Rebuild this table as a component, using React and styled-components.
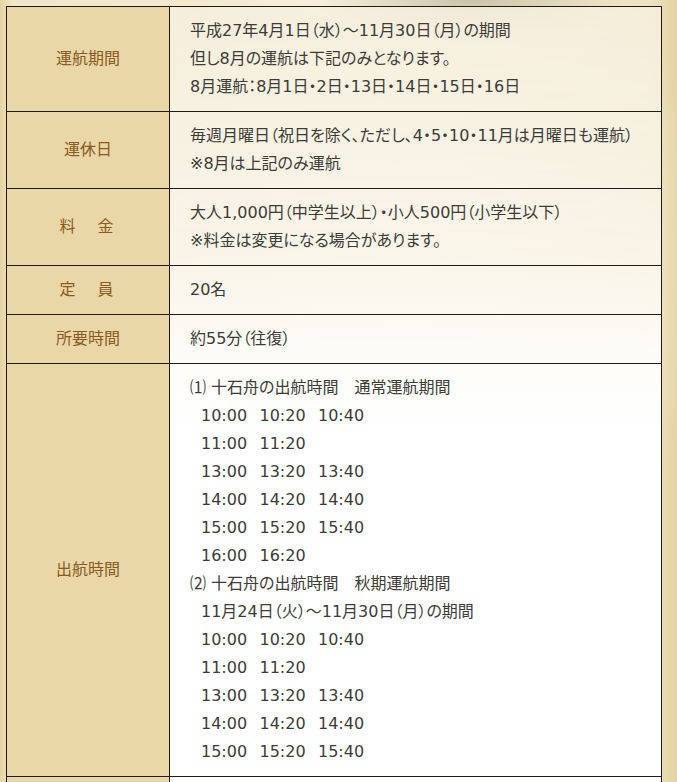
import React from "react";
import styled, { createGlobalStyle } from "styled-components";

// GLOBAL
const GlobalStyle = createGlobalStyle`
  html, body {
    margin: 0;
  }
  body {
    min-height: 782px;
    background-color: #eddfb8;
    background-image:
      radial-gradient(ellipse 220px 60px at 470px 0px, rgba(120, 120, 90, 0.35), transparent 70%),
      radial-gradient(ellipse 400px 500px at 420px 260px, rgba(255, 252, 240, 0.9), transparent 75%),
      linear-gradient(90deg, #e6d3a0 0px, #f1e6c8 12px, #f4ecd6 50%, #efe2c0 96%, #e4d2a2 100%);
    font-family: "DejaVu Sans", "Noto Sans CJK JP", sans-serif;
    font-feature-settings: "palt";
  }
`;

// STYLED COMPONENT
const Page = styled.div`
  padding: 6px 0 0 6px;
`;

const Table = styled.table`
  width: 656px;
  border-collapse: collapse;
  table-layout: fixed;
  border: 1px solid #1e1a14;
  background: linear-gradient(
    to bottom,
    rgba(246, 239, 221, 0.85) 0px,
    rgba(249, 245, 233, 0.9) 250px,
    rgba(253, 252, 248, 1) 360px,
    #ffffff 420px
  );
`;

const Label = styled.th`
  width: 162px;
  padding: 10px 0;
  border: 1px solid #1e1a14;
  background: #e9d7a7;
  color: #8b5a22;
  font-size: 16px;
  font-weight: normal;
  line-height: 28px;
  text-align: center;
  vertical-align: middle;
  letter-spacing: ${(props) => props.$spread || "0"};
`;

const Cell = styled.td`
  padding: 10px 20px;
  border: 1px solid #1e1a14;
  color: #3d3b38;
  font-size: 16px;
  line-height: 28px;
  vertical-align: middle;
`;

const Line = styled.div`
  white-space: nowrap;
  padding-left: ${(props) => (props.$indent ? "11px" : "0")};
`;

const TimeRow = styled.div`
  display: flex;
  gap: 12.5px;
  padding-left: 11px;
  white-space: nowrap;
`;

const Time = styled.span`
  width: 46px;
`;

// DATA
const rows = [
  {
    label: "運航期間",
    lines: [
      "平成27年4月1日（水）～11月30日（月）の期間",
      "但し8月の運航は下記のみとなります。",
      "8月運航：8月1日・2日・13日・14日・15日・16日",
    ],
  },
  {
    label: "運休日",
    lines: [
      "毎週月曜日（祝日を除く、ただし、4・5・10・11月は月曜日も運航）",
      "※8月は上記のみ運航",
    ],
  },
  {
    label: "料　金",
    spread: "3px",
    lines: [
      "大人1,000円（中学生以上）・小人500円（小学生以下）",
      "※料金は変更になる場合があります。",
    ],
  },
  { label: "定　員", spread: "3px", lines: ["20名"] },
  { label: "所要時間", lines: ["約55分（往復）"] },
];

const normalTimes = [
  ["10:00", "10:20", "10:40"],
  ["11:00", "11:20"],
  ["13:00", "13:20", "13:40"],
  ["14:00", "14:20", "14:40"],
  ["15:00", "15:20", "15:40"],
  ["16:00", "16:20"],
];

const autumnTimes = [
  ["10:00", "10:20", "10:40"],
  ["11:00", "11:20"],
  ["13:00", "13:20", "13:40"],
  ["14:00", "14:20", "14:40"],
  ["15:00", "15:20", "15:40"],
];

const renderTimes = (list) =>
  list.map((row, i) => (
    <TimeRow key={i}>
      {row.map((t) => (
        <Time key={t}>{t}</Time>
      ))}
    </TimeRow>
  ));

// MAIN COMPONENT
export default function App() {
  return (
    <>
      <GlobalStyle />
      <Page>
        <Table>
          <tbody>
            {rows.map((row) => (
              <tr key={row.label}>
                <Label $spread={row.spread}>{row.label}</Label>
                <Cell>
                  {row.lines.map((text, i) => (
                    <Line key={i}>{text}</Line>
                  ))}
                </Cell>
              </tr>
            ))}
            <tr>
              <Label>出航時間</Label>
              <Cell>
                <Line>⑴ 十石舟の出航時間　通常運航期間</Line>
                {renderTimes(normalTimes)}
                <Line>⑵ 十石舟の出航時間　秋期運航期間</Line>
                <Line $indent>11月24日（火）～11月30日（月）の期間</Line>
                {renderTimes(autumnTimes)}
              </Cell>
            </tr>
            <tr>
              <Label>&nbsp;</Label>
              <Cell>&nbsp;</Cell>
            </tr>
          </tbody>
        </Table>
      </Page>
    </>
  );
}
